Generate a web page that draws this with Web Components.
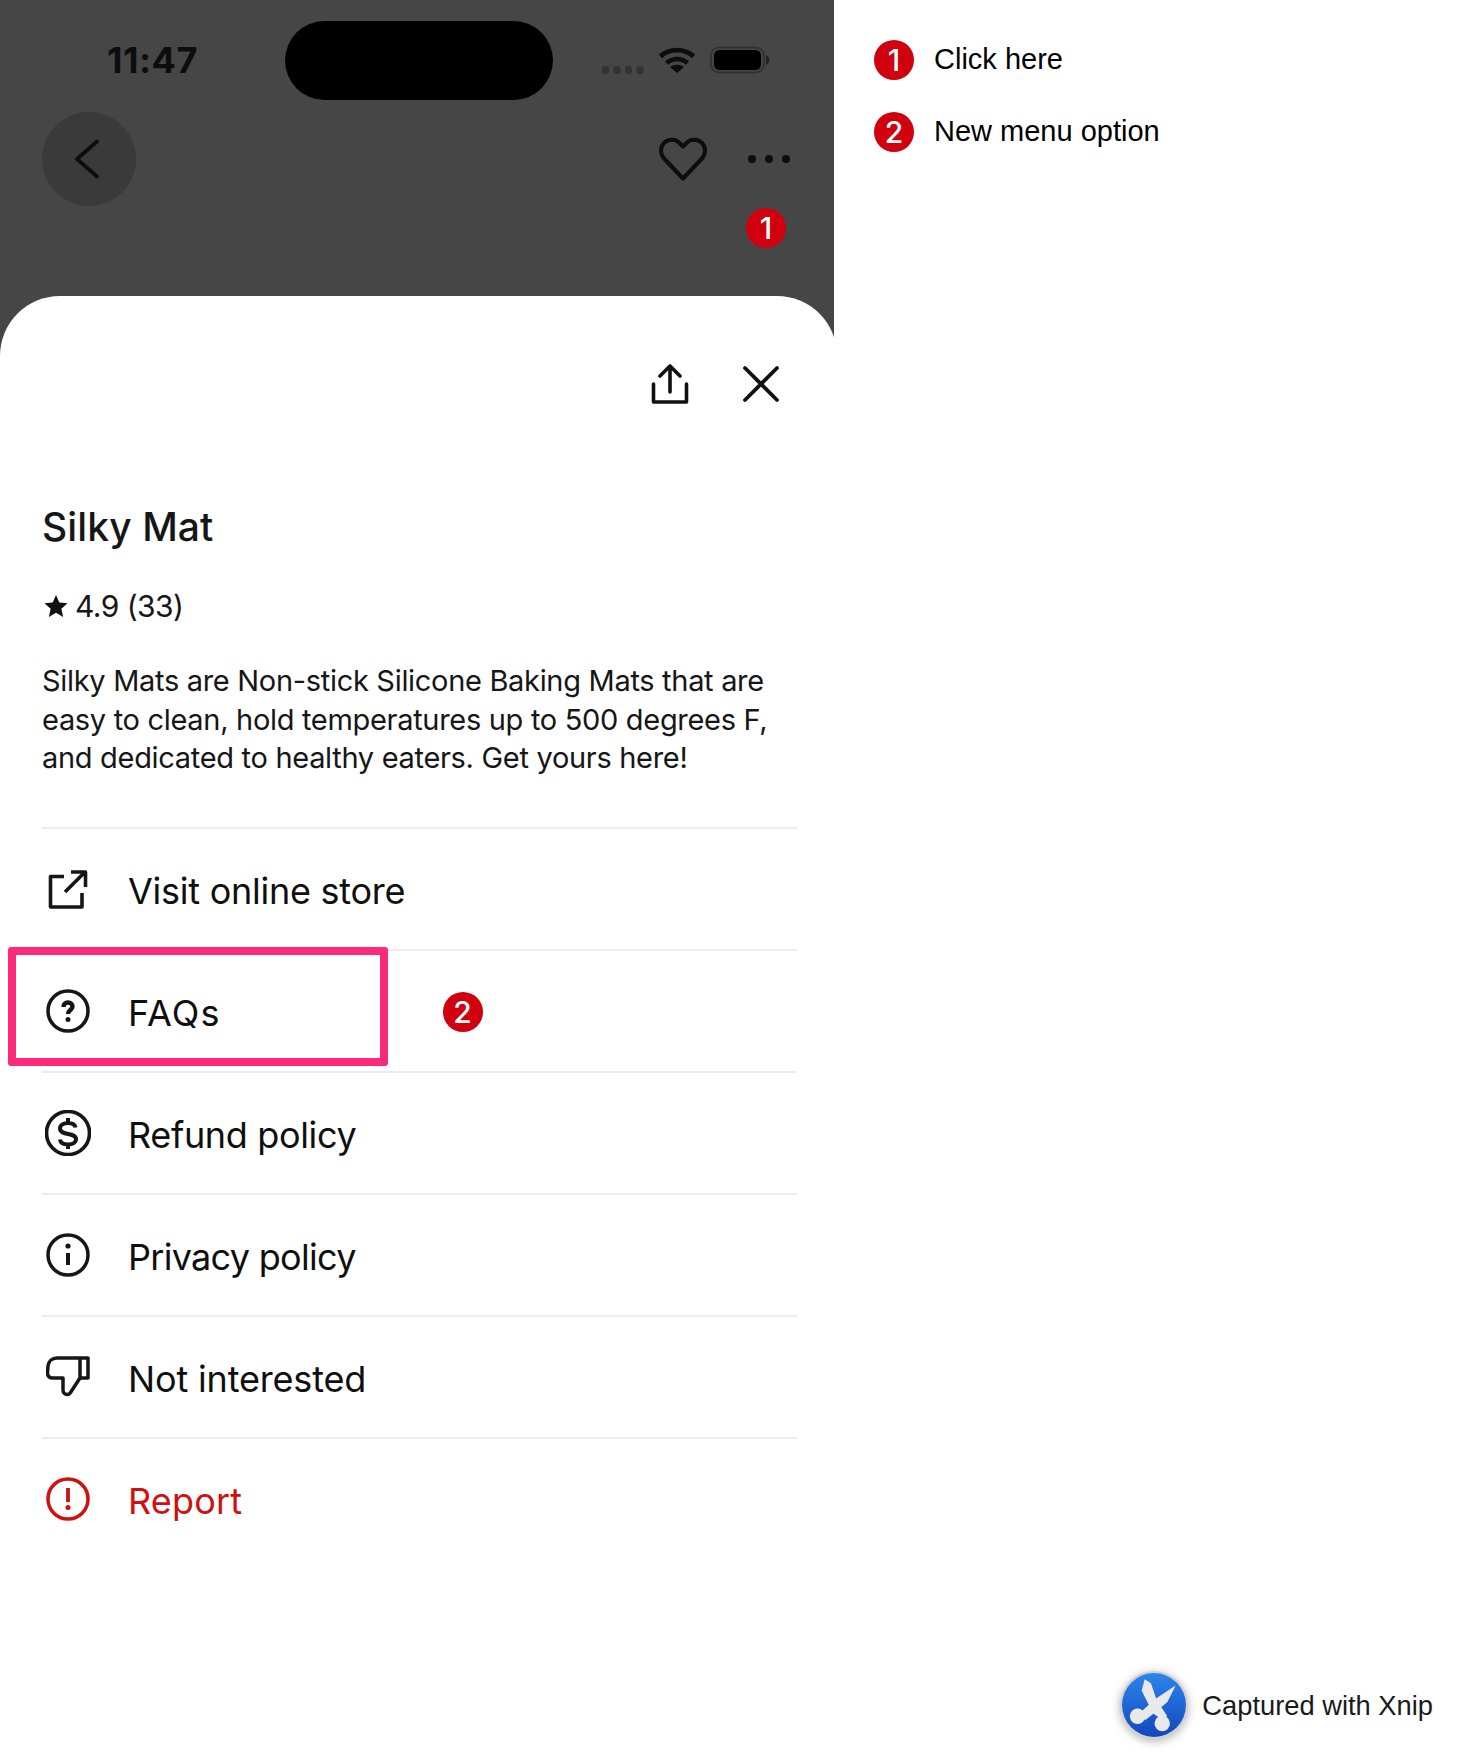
<!DOCTYPE html>
<html lang="en">
<head>
<meta charset="utf-8">
<title>Silky Mat</title>
<style>
  html, body { margin: 0; background: #fff; }
</style>
</head>
<body>
<guide-page>
  <phone-screen slot="phone"></phone-screen>
  <guide-legend slot="legend">
    <legend-item num="1">Click here</legend-item>
    <legend-item num="2">New menu option</legend-item>
  </guide-legend>
  <xnip-mark slot="mark"></xnip-mark>
</guide-page>

<script>
const ICONS = {
  back: `<path d="M33 7.500 13 25l20 17.500" fill="none" stroke="currentColor" stroke-width="3.800" stroke-linecap="round" stroke-linejoin="round"/>`,
  heart: `<path d="M24 41.500 5 21.500C1 17 1 10 5 6s11-4.500 15-.5l4 4 4-4c4-4 11-3.500 15 .5s4 11 0 15.500Z" fill="none" stroke="currentColor" stroke-width="4" stroke-linejoin="round"/>`,
  share: `<path d="M20 28V3M10 12l10-10 10 10M3.500 20v18h33V20" fill="none" stroke="currentColor" stroke-width="3.600" stroke-linecap="round" stroke-linejoin="round"/>`,
  close: `<path d="M3 3l32 32M35 3 3 35" fill="none" stroke="currentColor" stroke-width="3.800" stroke-linecap="round"/>`,
  open: `<path d="M16 7.500H2.500V38H34V24M17 23 37 3M23 3h14.500v15" fill="none" stroke="currentColor" stroke-width="3.600" stroke-linejoin="round"/>`,
  question: `<circle cx="22" cy="22" r="20" fill="none" stroke="currentColor" stroke-width="3.500"/><path d="M17.500 18c0-3 1.800-4.500 4.500-4.500s4.500 1.500 4.500 4c0 3.500-4.500 3.500-4.500 7.500" fill="none" stroke="currentColor" stroke-width="4.400"/><circle cx="22" cy="30.500" r="2.500" fill="currentColor"/>`,
  dollar: `<circle cx="23" cy="23" r="21.500" fill="none" stroke="currentColor" stroke-width="3.600"/><path d="M30.500 17.500c-.5-3-3.500-4.500-7.500-4.500-4.500 0-8 2-8 5.500 0 7.500 16 3.500 16 10.500 0 3.500-3.500 5.500-8 5.500s-7.500-1.500-8-5M23 8v6M23 33v6" fill="none" stroke="currentColor" stroke-width="4"/>`,
  info: `<circle cx="22" cy="22" r="20" fill="none" stroke="currentColor" stroke-width="3.500"/><circle cx="22" cy="13" r="2.600" fill="currentColor"/><path d="M22 20v12" stroke="currentColor" stroke-width="4"/>`,
  thumb: `<path d="M42 2H11C6 2 2.500 5.500 2 10l-.5 6.500c0 3.500 2 5.500 5 5.500H17v12c0 3 2 4.500 4 4.500s3-1 3.500-2L34 22h8ZM34 2v20" fill="none" stroke="currentColor" stroke-width="3.500" stroke-linejoin="round"/>`,
  alert: `<circle cx="22" cy="22" r="20" fill="none" stroke="currentColor" stroke-width="3.500"/><path d="M22 11v14" stroke="currentColor" stroke-width="3.800"/><circle cx="22" cy="30.500" r="2.500" fill="currentColor"/>`
}

const SIZES = {
  back: [50, 50], heart: [48, 44], share: [40, 40], close: [38, 38], open: [40, 40],
  question: [44, 44], dollar: [46, 46], info: [44, 44], thumb: [44, 41], alert: [44, 44]
}

class AppIcon extends HTMLElement {
  constructor() {
    super()
    this.attachShadow({ mode: 'open' })
  }

  connectedCallback() {
    const name = this.getAttribute('name')
    const [w, h] = SIZES[name]
    this.shadowRoot.innerHTML = /*html*/ `
      <style>
        :host { display: inline-flex; line-height: 0; }
      </style>
      <svg width="${w}" height="${h}" viewBox="0 0 ${w} ${h}">${ICONS[name]}</svg>
    `
  }
}

class NumBadge extends HTMLElement {
  constructor() {
    super()
    this.attachShadow({ mode: 'open' })
    this.shadowRoot.innerHTML = /*html*/ `
      <style>
        :host {
          display: inline-flex;
          align-items: center;
          justify-content: center;
          width: 40px;
          height: 40px;
          border-radius: 50%;
          background: #d0000f;
          color: #fff;
          font: 500 30px/1 Inter, sans-serif;
        }
      </style>
      <slot></slot>
    `
  }
}

class StatusBar extends HTMLElement {
  constructor() {
    super()
    this.attachShadow({ mode: 'open' })
    this.shadowRoot.innerHTML = /*html*/ `
      <style>
        :host {
          display: grid;
          grid-template-columns: 285px 268px 1fr;
          align-items: center;
          height: 79px;
          padding-top: 21px;
          color: #0d0d0d;
        }
        .time {
          padding: 0 0 2px 107px;
          font: 700 36px/1 Inter, sans-serif;
          letter-spacing: .5px;
        }
        .island {
          height: 79px;
          border-radius: 40px;
          background: #000;
        }
        .right {
          display: flex;
          align-items: center;
          margin-top: -2px;
          padding-left: 49px;
        }
        .signal { margin-top: 20px; margin-right: 15px; }
        .wifi { margin-right: 15px; }
      </style>
      <span class="time">11:47</span>
      <div class="island"></div>
      <div class="right">
        <svg class="signal" width="42" height="8" viewBox="0 0 42 8" fill="#333">
          <rect x="0" width="7" height="8" rx="2.500"/><rect x="11.500" width="7" height="8" rx="2.500"/>
          <rect x="23" width="7" height="8" rx="2.500"/><rect x="34.500" width="7" height="8" rx="2.500"/>
        </svg>
        <svg class="wifi" width="36" height="26" viewBox="0 0 36 26" fill="none" stroke="#0d0d0d">
          <path d="M1.500 9.500C10 1 26 1 34.500 9.500" stroke-width="4.800"/>
          <path d="M7.500 16c6-5.500 15-5.500 21 0" stroke-width="4.500"/>
          <path d="M18 26 11 20c4-3 10-3 14 0Z" fill="#0d0d0d" stroke="none"/>
        </svg>
        <svg width="60" height="28" viewBox="0 0 60 28">
          <rect x="1" y="1.500" width="53" height="25" rx="8" fill="none" stroke="#333" stroke-width="2"/>
          <rect x="4" y="4" width="47" height="20" rx="5.500" fill="#000"/>
          <path d="M56 9.500c2 .5 3.500 2.200 3.500 4.500s-1.500 4-3.500 4.500Z" fill="#222"/>
        </svg>
      </div>
    `
  }
}

class NavBar extends HTMLElement {
  constructor() {
    super()
    this.attachShadow({ mode: 'open' })
    this.shadowRoot.innerHTML = /*html*/ `
      <style>
        :host {
          display: flex;
          align-items: center;
          height: 94px;
          margin-top: 12px;
          padding: 0 44px 0 42px;
          color: #0d0d0d;
        }
        .back {
          display: flex;
          align-items: center;
          justify-content: center;
          width: 94px;
          height: 94px;
          border-radius: 50%;
          background: #3a3a3a;
        }
        .heart { margin-left: auto; margin-right: 41px; }
        .dots { display: flex; gap: 9px; }
        .dots i { width: 8px; height: 8px; border-radius: 50%; background: #0d0d0d; }
      </style>
      <div class="back"><app-icon name="back"></app-icon></div>
      <app-icon class="heart" name="heart"></app-icon>
      <div class="dots"><i></i><i></i><i></i></div>
    `
  }
}

class MenuRow extends HTMLElement {
  constructor() {
    super()
    this.attachShadow({ mode: 'open' })
    this.shadowRoot.innerHTML = /*html*/ `
      <style>
        :host {
          display: flex;
          align-items: center;
          position: relative;
          height: 120px;
          border-top: 2px solid #ececec;
          font: 400 36px/1 Inter, sans-serif;
          color: #0f0f0f;
        }
        :host([tone="danger"]) { color: #d10f0f; }
        .icon {
          display: flex;
          justify-content: center;
          width: 52px;
          margin-right: 34px;
          color: #161616;
        }
        :host([tone="danger"]) .icon { color: #d10f0f; }
        .label { padding-top: 4px; }
      </style>
      <span class="icon"><app-icon name="${this.getAttribute('icon')}"></app-icon></span>
      <span class="label"><slot></slot></span>
      <slot name="extra"></slot>
    `
  }
}

class HighlightBox extends HTMLElement {
  constructor() {
    super()
    this.attachShadow({ mode: 'open' })
    this.shadowRoot.innerHTML = /*html*/ `
      <style>
        :host {
          position: absolute;
          left: -34px;
          top: -4px;
          box-sizing: border-box;
          width: 380px;
          height: 119px;
          border: 8px solid #fb2a7a;
          border-radius: 3px;
        }
      </style>
    `
  }
}

class InfoSheet extends HTMLElement {
  constructor() {
    super()
    this.attachShadow({ mode: 'open' })
    this.shadowRoot.innerHTML = /*html*/ `
      <style>
        :host {
          display: block;
          box-sizing: border-box;
          height: 1468px;
          margin-right: -3px;
          padding: 0 40px 0 42px;
          border-radius: 60px 60px 0 0;
          background: #fff;
          color: #161616;
          font-family: Inter, sans-serif;
        }
        .tools {
          display: flex;
          justify-content: flex-end;
          align-items: center;
          gap: 52px;
          padding: 68px 17px 0 0;
          color: #111;
        }
        h1 {
          margin: 0;
          padding-top: 98px;
          font: 500 39px/50px Inter, sans-serif;
          letter-spacing: .1px;
        }
        .rating {
          display: flex;
          align-items: center;
          gap: 7px;
          margin-top: 36px;
          font: 400 30px/36px Inter, sans-serif;
          letter-spacing: -.55px;
        }
        .rating svg { margin-left: 2px; }
        p {
          margin: 38px 0 49px;
          font: 400 29px/38.600px Inter, sans-serif;
          letter-spacing: -.31px;
        }
        .pin { position: absolute; left: 401px; top: 41px; }
      </style>
      <div class="tools">
        <app-icon name="share"></app-icon>
        <app-icon name="close"></app-icon>
      </div>
      <h1>Silky Mat</h1>
      <div class="rating">
        <svg width="24" height="24" viewBox="0 0 26 26" fill="#111"><path d="M13 1l3.600 8.200 8.900.9-6.700 6 1.900 8.800L13 20.300l-7.700 4.600 1.900-8.800-6.700-6 8.900-.9Z"/></svg>
        <span>4.9 (33)</span>
      </div>
      <p>Silky Mats are Non-stick Silicone Baking Mats that are easy to clean, hold temperatures up to 500 degrees F, and dedicated to healthy eaters. Get yours here!</p>
      <menu-row icon="open" style="letter-spacing:-.25px">Visit online store</menu-row>
      <menu-row icon="question" style="letter-spacing:1.100px">FAQs<highlight-box slot="extra"></highlight-box><num-badge slot="extra" class="pin">2</num-badge></menu-row>
      <menu-row icon="dollar" style="letter-spacing:-.35px">Refund policy</menu-row>
      <menu-row icon="info" style="letter-spacing:-.7px">Privacy policy</menu-row>
      <menu-row icon="thumb" style="letter-spacing:-.16px">Not interested</menu-row>
      <menu-row icon="alert" tone="danger" style="letter-spacing:.2px">Report</menu-row>
    `
  }
}

class PhoneScreen extends HTMLElement {
  constructor() {
    super()
    this.attachShadow({ mode: 'open' })
    this.shadowRoot.innerHTML = /*html*/ `
      <style>
        :host {
          display: block;
          position: relative;
          width: 834px;
          height: 1764px;
          background: linear-gradient(#464646 0 400px, #fff 400px);
          overflow: hidden;
        }
        .top { height: 296px; box-sizing: border-box; }
        .pin { position: absolute; left: 746px; top: 208px; }
      </style>
      <div class="top">
        <status-bar></status-bar>
        <nav-bar></nav-bar>
      </div>
      <num-badge class="pin">1</num-badge>
      <info-sheet></info-sheet>
    `
  }
}

class LegendItem extends HTMLElement {
  constructor() {
    super()
    this.attachShadow({ mode: 'open' })
    this.shadowRoot.innerHTML = /*html*/ `
      <style>
        :host {
          display: flex;
          align-items: center;
          gap: 20px;
          height: 40px;
          color: #000;
          font: 400 29px/40px "Liberation Sans", Arial, sans-serif;
        }
        span { margin-top: -2px; }
      </style>
      <num-badge>${this.getAttribute('num')}</num-badge>
      <span><slot></slot></span>
    `
  }
}

class GuideLegend extends HTMLElement {
  constructor() {
    super()
    this.attachShadow({ mode: 'open' })
    this.shadowRoot.innerHTML = /*html*/ `
      <style>
        :host { display: flex; flex-direction: column; gap: 32px; padding: 40px 0 0 40px; }
      </style>
      <slot></slot>
    `
  }
}

class XnipMark extends HTMLElement {
  constructor() {
    super()
    this.attachShadow({ mode: 'open' })
    this.shadowRoot.innerHTML = /*html*/ `
      <style>
        :host {
          display: flex;
          align-items: center;
          justify-content: flex-end;
          gap: 14px;
          padding: 0 41px 24px 0;
          color: #1a1a1a;
          font: 400 27.300px/68px "Liberation Sans", Arial, sans-serif;
        }
        svg { filter: drop-shadow(0 2px 5px rgba(0,0,0,.3)); overflow: visible; }
        span { padding-top: 2px; }
      </style>
      <svg width="68" height="68" viewBox="0 0 66 66">
        <defs>
          <linearGradient id="g" x1="0" y1="0" x2="0" y2="1">
            <stop offset="0" stop-color="#2c86ec"/>
            <stop offset="1" stop-color="#1346bd"/>
          </linearGradient>
        </defs>
        <circle cx="33" cy="33" r="33" fill="#d2d2d2"/>
        <circle cx="33" cy="33" r="31" fill="url(#g)"/>
        <g fill="#e9e9e9">
          <circle cx="17" cy="44" r="7.500"/>
          <circle cx="41" cy="51" r="7.500"/>
          <path d="M24 8l-3 11 11 22 7 5 7-2-10-15-6-17Z"/>
          <path d="M54 14 36 26 22 38l2 10 9-7 13-11Z"/>
        </g>
      </svg>
      <span>Captured with Xnip</span>
    `
  }
}

class GuidePage extends HTMLElement {
  constructor() {
    super()
    this.attachShadow({ mode: 'open' })
    this.shadowRoot.innerHTML = /*html*/ `
      <style>
        :host {
          display: grid;
          grid-template-columns: 834px 1fr;
          width: 1474px;
          height: 1764px;
          overflow: hidden;
          background: #fff;
        }
        aside { display: flex; flex-direction: column; justify-content: space-between; }
      </style>
      <slot name="phone"></slot>
      <aside>
        <slot name="legend"></slot>
        <slot name="mark"></slot>
      </aside>
    `
  }
}

customElements.define('app-icon', AppIcon)
customElements.define('num-badge', NumBadge)
customElements.define('status-bar', StatusBar)
customElements.define('nav-bar', NavBar)
customElements.define('menu-row', MenuRow)
customElements.define('highlight-box', HighlightBox)
customElements.define('info-sheet', InfoSheet)
customElements.define('phone-screen', PhoneScreen)
customElements.define('legend-item', LegendItem)
customElements.define('guide-legend', GuideLegend)
customElements.define('xnip-mark', XnipMark)
customElements.define('guide-page', GuidePage)
</script>
</body>
</html>
